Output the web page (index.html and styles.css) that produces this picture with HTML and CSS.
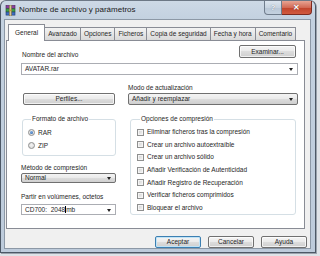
FILE: index.html
```html
<!DOCTYPE html>
<html>
<head>
<meta charset="utf-8">
<link rel="stylesheet" href="styles.css">
</head>
<body>
<div class="window">
  <div class="titlebar">
    <svg class="appicon" width="11" height="11" viewBox="0 0 11 11">
      <rect x="1" y="0.5" width="9" height="3" fill="#8a3f9e" stroke="#4b1f5a" stroke-width="0.6"/>
      <rect x="1" y="3.8" width="9" height="3" fill="#3fa04a" stroke="#1f5a25" stroke-width="0.6"/>
      <rect x="1" y="7.1" width="9" height="3" fill="#3e6fc4" stroke="#1f3a6e" stroke-width="0.6"/>
      <rect x="4.2" y="0" width="2.4" height="11" fill="#d9c79a" stroke="#6b5a30" stroke-width="0.5"/>
      <rect x="4.4" y="4.6" width="2" height="1.6" fill="#c9a23a"/>
    </svg>
    <span class="title">Nombre de archivo y parámetros</span>
    <div class="caption-btns">
      <span class="cbtn help">?</span>
      <span class="cbtn close">✕</span>
    </div>
  </div>
  <div class="client">
    <div class="tabs">
      <span class="tab active">General</span>
      <span class="tab">Avanzado</span>
      <span class="tab">Opciones</span>
      <span class="tab">Ficheros</span>
      <span class="tab">Copia de seguridad</span>
      <span class="tab">Fecha y hora</span>
      <span class="tab">Comentario</span>
    </div>
    <div class="panel">
      <div class="name-row">
        <span class="lbl">Nombre del archivo</span>
        <span class="btn browse">Examinar...</span>
      </div>
      <div class="combo name-combo"><span>AVATAR.rar</span><i class="arrow"></i></div>
      <div class="cols">
        <span class="lbl mode-lbl">Modo de actualización</span>
        <span class="btn profiles">Perfiles...</span>
        <div class="combo dd"><span>Añadir y reemplazar</span><i class="arrow"></i></div>
        <div class="leftstack">
          <fieldset class="group fmt">
            <legend>Formato de archivo</legend>
            <div class="opt"><span class="radio checked"></span>RAR</div>
            <div class="opt"><span class="radio"></span>ZIP</div>
          </fieldset>
          <span class="lbl method-lbl">Método de compresión</span>
          <div class="combo dd small"><span>Normal</span><i class="arrow"></i></div>
          <span class="lbl split-lbl">Partir en volúmenes, octetos</span>
          <div class="combo edit"><span>CD700:&nbsp; 2048<b class="caret"></b>mb</span><i class="arrow"></i></div>
        </div>
        <fieldset class="group opts">
          <legend>Opciones de compresión</legend>
          <div class="opt"><span class="check"></span>Eliminar ficheros tras la compresión</div>
          <div class="opt"><span class="check"></span>Crear un archivo autoextraíble</div>
          <div class="opt"><span class="check"></span>Crear un archivo sólido</div>
          <div class="opt"><span class="check"></span>Añadir Verificación de Autenticidad</div>
          <div class="opt"><span class="check"></span>Añadir Registro de Recuperación</div>
          <div class="opt"><span class="check"></span>Verificar ficheros comprimidos</div>
          <div class="opt"><span class="check"></span>Bloquear el archivo</div>
        </fieldset>
      </div>
    </div>
    <div class="footer">
      <span class="btn default">Aceptar</span>
      <span class="btn">Cancelar</span>
      <span class="btn">Ayuda</span>
    </div>
  </div>
</div>
</body>
</html>
```
FILE: styles.css
```css
* { box-sizing: border-box; }
html, body { margin: 0; padding: 0; }
body {
  width: 320px;
  height: 256px;
  overflow: hidden;
  background: #dfe3e8;
  font-family: "Liberation Sans", Arial, sans-serif;
  font-size: 6.5px;
  line-height: 8px;
  color: #262626;
}
.window {
  width: 316px;
  height: 253px;
  border: 1px solid #4d5866;
  border-top-color: #6d7886;
  border-radius: 6px 6px 0 0;
  background: linear-gradient(180deg, #cdd9e6 0px, #c3d1e0 18px, #bdcbdb 100%);
  display: flex;
  flex-direction: column;
  padding: 0 4px 3px 3px;
  box-shadow: 1px 1px 0 #9aa3ad;
}
.titlebar {
  height: 18px;
  display: flex;
  align-items: flex-start;
  flex: none;
}
.appicon { margin: 4px 0 0 1px; flex: none; }
.title {
  font-size: 8px;
  line-height: 10px;
  margin: 4px 0 0 3px;
  color: #1a1a1a;
  white-space: nowrap;
}
.caption-btns {
  margin-left: auto;
  display: flex;
  height: 14px;
  margin-right: -1px;
}
.cbtn {
  height: 14px;
  display: flex;
  align-items: center;
  justify-content: center;
  color: #fff;
  border: 1px solid #6f7c8c;
  border-top: none;
  font-size: 8px;
  font-weight: bold;
}
.help {
  width: 18px;
  border-radius: 0 0 0 4px;
  background: linear-gradient(180deg, #dce5ef 0%, #c7d3e0 50%, #b8c6d6 51%, #c4d1df 100%);
  color: #f4f7fb;
  text-shadow: 0 0 1px #5c6876;
}
.close {
  width: 30px;
  border-left: none;
  border-radius: 0 0 4px 0;
  background: linear-gradient(180deg, #e8a493 0%, #d26a55 50%, #c0432b 51%, #d15a3f 100%);
  text-shadow: 0 0 1px #6a1a10;
  border-color: #7d2b20;
}
.client {
  flex: 1;
  background: #f0f0f0;
  border: 1px solid #8c98a6;
  display: flex;
  flex-direction: column;
  padding: 3px 5px 0 1px;
}
.tabs {
  display: flex;
  align-items: flex-end;
  height: 17px;
  padding-left: 2px;
  flex: none;
}
.tab {
  height: 13px;
  padding: 0 3px;
  border: 1px solid #898c95;
  border-bottom: none;
  margin-right: -1px;
  background: linear-gradient(180deg, #f3f3f3, #e6e6e6 50%, #d9d9d9 100%);
  display: flex;
  align-items: center;
  white-space: nowrap;
}
.tab.active {
  background: #fff;
  padding: 0 6px 1px;
  position: relative;
  z-index: 1;
  height: 17px;
  margin-bottom: -1px;
}
.panel {
  background: #fff;
  border: 1px solid #898c95;
  height: 189px;
  flex: none;
  padding: 4px 6px 0 14px;
  display: flex;
  flex-direction: column;
}
.lbl { white-space: nowrap; }
.name-row {
  display: flex;
  align-items: flex-end;
  justify-content: space-between;
  height: 13px;
}
.name-row .lbl { margin-left: 1px; margin-bottom: -1px; }
.btn {
  display: flex;
  align-items: center;
  justify-content: center;
  border: 1px solid #707070;
  border-radius: 2px;
  background: linear-gradient(180deg, #f4f4f4 0%, #ebebeb 45%, #dddddd 50%, #cfcfcf 100%);
  box-shadow: inset 0 0 0 1px rgba(255,255,255,0.7);
  white-space: nowrap;
  color: #262626;
}
.browse { width: 57px; height: 13px; margin-right: 2px; }
.combo {
  position: relative;
  height: 12px;
  border: 1px solid #abadb3;
  background: #fff;
  display: flex;
  align-items: center;
  padding-left: 3px;
  white-space: nowrap;
}
.combo .arrow {
  position: absolute;
  right: 4px;
  top: 50%;
  margin-top: -1px;
  width: 0;
  height: 0;
  border-left: 2px solid transparent;
  border-right: 2px solid transparent;
  border-top: 3px solid #222;
}
.name-combo { margin-top: 5px; }
.cols {
  display: grid;
  grid-template-columns: 95px 170px;
  column-gap: 12px;
  grid-template-rows: 18px 12px auto;
  align-items: end;
}
.mode-lbl { grid-column: 2; grid-row: 1; margin-bottom: 1px; }
.profiles { grid-column: 1; grid-row: 2; height: 12px; margin-left: 2px; margin-right: 1px; }
.cols > .dd { grid-column: 2; grid-row: 2; }
.dd {
  border-color: #707070;
  border-radius: 2px;
  background: linear-gradient(180deg, #f4f4f4 0%, #ebebeb 45%, #dddddd 50%, #cfcfcf 100%);
}
.leftstack {
  grid-column: 1;
  grid-row: 3;
  align-self: start;
  display: flex;
  flex-direction: column;
}
.group {
  margin: 10px 0 0 0;
  padding: 0;
  border: 1px solid #d5dfe5;
  border-radius: 3px;
  min-width: 0;
}
.group legend {
  padding: 0 1px;
  margin-left: 3px;
  line-height: 8px;
}
.fmt {
  margin-left: 1px;
  height: 41px;
  padding: 3px 0 0 5px;
}
.opts {
  grid-column: 2;
  grid-row: 3;
  align-self: start;
  margin-left: 2px;
  margin-right: 2px;
  height: 100px;
  padding: 3px 0 0 6px;
}
.opt {
  display: flex;
  align-items: center;
  height: 12.6px;
  white-space: nowrap;
}
.fmt .opt { height: 13px; }
.radio {
  width: 7px;
  height: 7px;
  border-radius: 50%;
  border: 1px solid #8e8f8f;
  background: radial-gradient(circle at 50% 40%, #f4f4f4, #d6d6d6);
  margin-right: 3px;
  position: relative;
  flex: none;
}
.radio.checked::after {
  content: "";
  position: absolute;
  left: 1px; top: 1px;
  width: 3px; height: 3px;
  border-radius: 50%;
  background: radial-gradient(circle at 40% 35%, #7fb0e8, #20579e);
}
.check {
  width: 7px;
  height: 7px;
  border: 1px solid #8e8f8f;
  background: linear-gradient(135deg, #cfcfcf, #f6f6f6);
  box-shadow: inset 0 0 0 1px #f4f4f4;
  margin-right: 3px;
  flex: none;
}
.method-lbl { margin-top: 8px; }
.small { height: 10px; margin-top: 1px; }
.split-lbl { margin-top: 10px; }
.edit { height: 11px; margin-top: 3px; }
.caret {
  display: inline-block;
  width: 1px;
  height: 7px;
  background: #000;
  vertical-align: -1px;
}
.footer {
  display: flex;
  justify-content: flex-end;
  gap: 7px;
  padding-top: 7px;
  margin-right: -2px;
}
.footer .btn { width: 46px; height: 12px; }
.footer .default { border-color: #3c7fb1; box-shadow: inset 0 0 0 1px #bfe3f7; }
```
